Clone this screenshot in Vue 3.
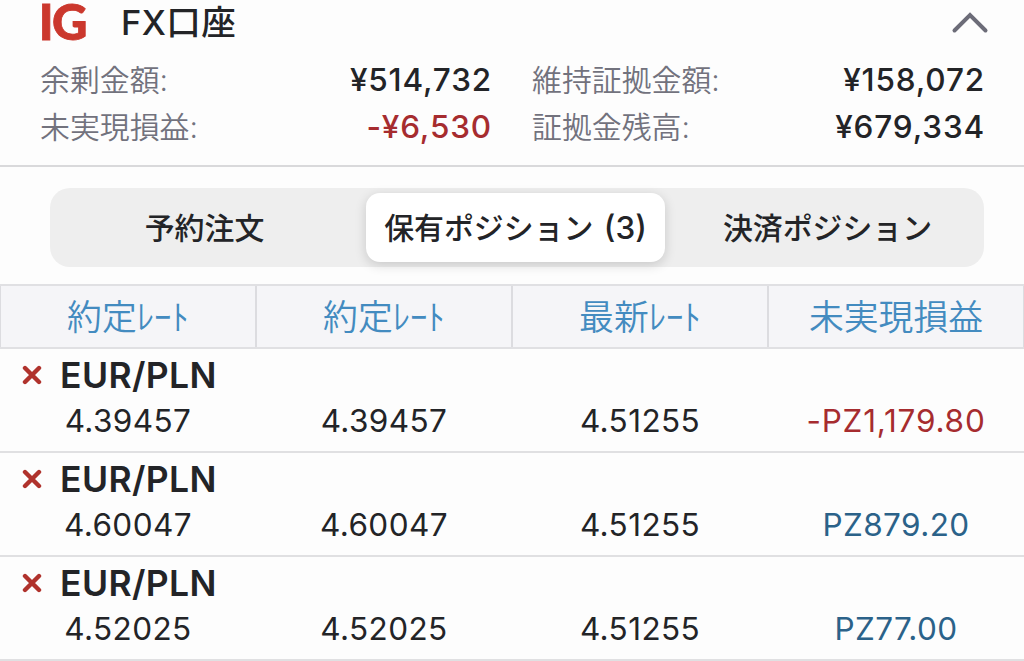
<script setup>
import { ref } from 'vue'

const opened = ref(true)
const activeTab = ref('positions')

const summary = [
  { label: '余剰金額:', value: '¥514,732' },
  { label: '維持証拠金額:', value: '¥158,072' },
  { label: '未実現損益:', value: '-¥6,530', loss: true },
  { label: '証拠金残高:', value: '¥679,334' }
]

const tabs = [
  { key: 'orders', label: '予約注文' },
  { key: 'positions', label: '保有ポジション', count: 3 },
  { key: 'closed', label: '決済ポジション' }
]

const columns = ['約定ﾚｰﾄ', '約定ﾚｰﾄ', '最新ﾚｰﾄ', '未実現損益']

const positions = [
  { id: 1, pair: 'EUR/PLN', rates: ['4.39457', '4.39457', '4.51255'], profit: '-PZ1,179.80' },
  { id: 2, pair: 'EUR/PLN', rates: ['4.60047', '4.60047', '4.51255'], profit: 'PZ879.20' },
  { id: 3, pair: 'EUR/PLN', rates: ['4.52025', '4.52025', '4.51255'], profit: 'PZ77.00' }
]
</script>

<template>
  <div class="account">
    <header class="account-header">
      <svg class="logo" width="54" height="46" viewBox="0 0 54 46">
        <text x="-1.3 12" y="40">IG</text>
      </svg>
      <h1 class="title">FX口座</h1>
      <button class="toggle" @click="opened = !opened">
        <svg width="38" height="24" viewBox="0 0 38 24">
          <path d="M3.5 19.5 L19 4 L34.5 19.5" />
        </svg>
      </button>
    </header>

    <dl v-if="opened" class="summary">
      <div v-for="item in summary" :key="item.label" class="summary-item">
        <dt>{{ item.label }}</dt>
        <dd :class="{ loss: item.loss }">{{ item.value }}</dd>
      </div>
    </dl>

    <div class="tabs-wrap">
      <nav class="tabs">
        <button
          v-for="tab in tabs"
          :key="tab.key"
          class="tab"
          :class="{ active: tab.key === activeTab }"
          @click="activeTab = tab.key"
        >{{ tab.label }}<span v-if="tab.count" class="count"> ({{ tab.count }})</span></button>
      </nav>
    </div>

    <div class="columns">
      <div v-for="(name, index) in columns" :key="index" class="column">{{ name }}</div>
    </div>

    <div v-for="item in positions" :key="item.id" class="position">
      <div class="pair-row">
        <svg class="close" width="20" height="20" viewBox="0 0 20 20">
          <path d="M3 3 L17 17 M17 3 L3 17" />
        </svg>
        <span class="pair">{{ item.pair }}</span>
      </div>
      <div class="values">
        <span v-for="(rate, index) in item.rates" :key="index">{{ rate }}</span>
        <span :class="item.profit.startsWith('-') ? 'loss' : 'gain'">{{ item.profit }}</span>
      </div>
    </div>
  </div>
</template>

<style>
body {
  background: #fdfdfd;
}
</style>

<style scoped>
.account {
  width: 1024px;
  height: 661px;
  overflow: hidden;
  background: #fdfdfd;
  color: #232427;
  font-family: Inter, "Noto Sans CJK JP", sans-serif;
}

button {
  padding: 0;
  border: 0;
  background: none;
  color: inherit;
  font-family: inherit;
}

.account-header {
  display: flex;
  align-items: center;
  box-sizing: border-box;
  height: 56px;
  padding: 0 35px 10px 40px;
}

.logo {
  overflow: visible;
}

.logo text {
  font-family: Lato, sans-serif;
  font-size: 49px;
  font-weight: 900;
  fill: #cb382d;
  stroke: #cb382d;
  stroke-width: 0.8;
}

.title {
  margin: 0 0 0 27px;
  font-size: 34.5px;
  font-weight: 500;
  letter-spacing: 0.4px;
  line-height: 46px;
}

.toggle {
  display: flex;
  margin-left: auto;
}

.toggle path {
  fill: none;
  stroke: #6c6c78;
  stroke-width: 4;
  stroke-linecap: round;
}

.summary {
  display: grid;
  grid-template-columns: 452px 453px;
  grid-auto-rows: 47px;
  column-gap: 40px;
  box-sizing: border-box;
  height: 111px;
  margin: 0;
  padding-left: 40px;
  border-bottom: 2px solid #d9d9db;
}

.summary-item {
  display: flex;
  align-items: center;
  justify-content: space-between;
}

.summary dt {
  padding-bottom: 4px;
  color: #72727d;
  font-size: 29.9px;
  font-weight: 350;
}

.summary dd {
  margin: 0;
  font-size: 31.5px;
  font-weight: 500;
  letter-spacing: 0.85px;
}

.loss,
.summary .loss {
  color: #a62c2f;
}

.gain {
  color: #2b6289;
}

.tabs-wrap {
  padding: 21px 40px 17px 50px;
}

.tabs {
  display: grid;
  grid-template-columns: 311px 307px 316px;
  box-sizing: border-box;
  height: 79px;
  padding: 5px 0;
  border-radius: 20px;
  background: #eee;
}

.tab {
  padding-bottom: 4px;
  font-size: 29.9px;
  font-weight: 500;
}

.tab:first-child {
  padding-right: 2px;
}

.tab:last-child {
  padding-left: 3px;
}

.tab.active {
  margin: 0 3px 0 5px;
  border-radius: 14px;
  background: #fff;
  box-shadow: 0 3px 12px rgba(0, 0, 0, 0.16);
}

.count {
  font-size: 31.5px;
  word-spacing: 2px;
}

.columns {
  display: grid;
  grid-template-columns: repeat(4, 256px);
  box-sizing: border-box;
  height: 65px;
  border-top: 2px solid #e0e0e3;
  border-bottom: 2px solid #e0e0e3;
  background: #f5f5f8;
}

.column {
  display: flex;
  align-items: center;
  justify-content: center;
  padding-bottom: 3px;
  border-left: 1px solid #dcdce0;
  border-right: 1px solid #dcdce0;
  color: #438bc0;
  font-size: 34.8px;
  font-weight: 350;
}

.position {
  box-sizing: border-box;
  height: 104px;
  padding-top: 1px;
  border-bottom: 2px solid #e0e0e2;
}

.pair-row {
  display: flex;
  align-items: center;
  height: 49px;
  padding-left: 22px;
}

.close path {
  stroke: #b0332d;
  stroke-width: 4.4;
  stroke-linecap: round;
}

.pair {
  margin-left: 18px;
  padding-top: 2px;
  font-size: 35.5px;
  font-weight: 600;
  letter-spacing: 0.4px;
}

.values {
  display: grid;
  grid-template-columns: repeat(4, 256px);
  font-size: 31.5px;
  letter-spacing: 0.4px;
  line-height: 44px;
  text-align: center;
}

.values .loss {
  letter-spacing: 0.8px;
}
</style>
